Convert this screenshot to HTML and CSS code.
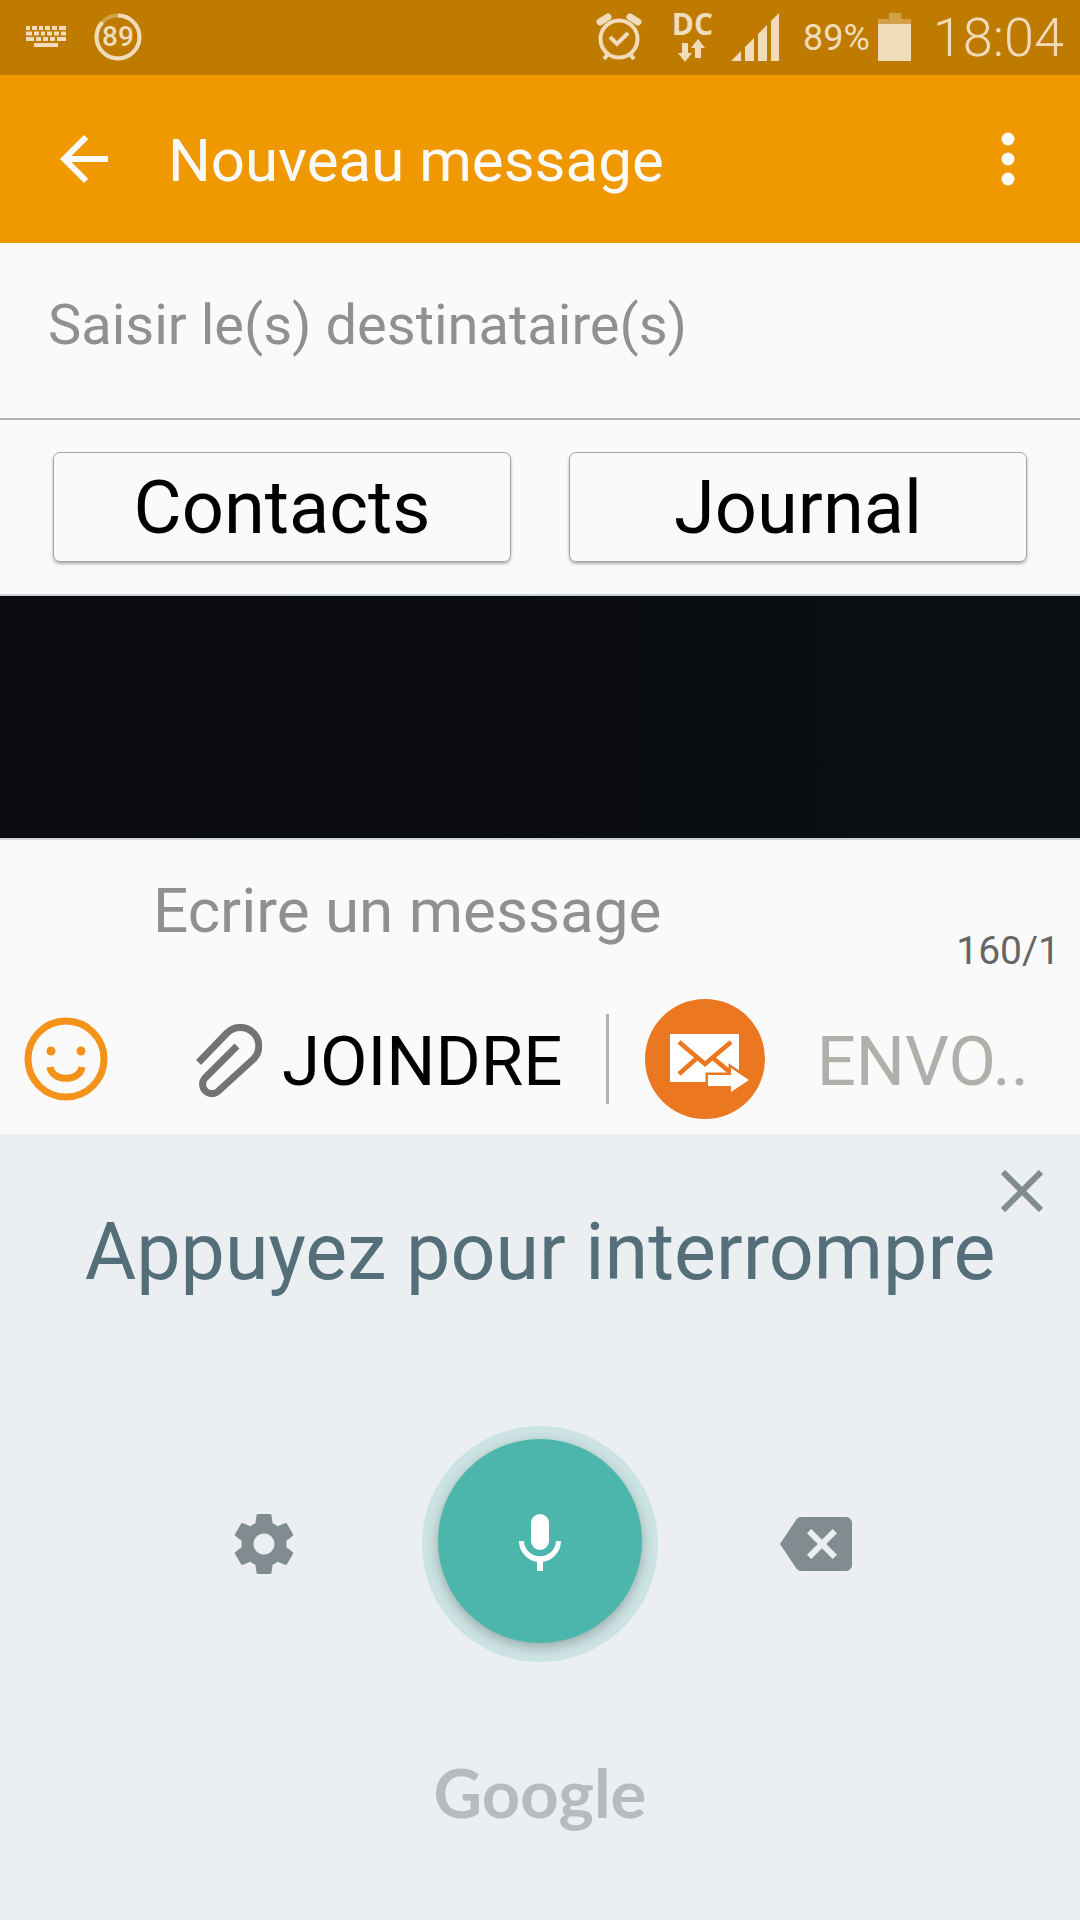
FILE: index.html
```html
<!DOCTYPE html>
<html lang="fr">
  <head>
    <meta charset="UTF-8" />
    <meta name="viewport" content="width=device-width, initial-scale=1" />
    <title>Nouveau message</title>
    <link rel="stylesheet" href="styles.css">
  </head>
  <body>
    <div class="statusbar">
      <svg class="keyboard-icon" width="40" height="21" viewBox="0 0 40 21">
        <path d="M0 2h40" stroke-dasharray="4 2 5 2 4 2 5 2 5 2 7" />
        <path d="M0 7.500h40" stroke-dasharray="6 2 5 2 4 2 5 2 5 2 5" />
        <path d="M0 13h40" stroke-dasharray="8 2 5 2 5 2 5 2 9" />
        <path d="M8 19h24" />
      </svg>
      <div class="battery-ring">
        <svg width="48" height="48" viewBox="0 0 48 48">
          <circle class="track" cx="24" cy="24" r="21.500" />
          <circle class="level" cx="24" cy="24" r="21.500" pathLength="100" stroke-dasharray="87 13" transform="rotate(-90 24 24)" />
        </svg>
        <span>89</span>
      </div>

      <div class="status-right">
        <svg class="alarm-icon" width="46" height="48" viewBox="0 0 46 48">
          <circle cx="23" cy="26" r="18.500" />
          <path d="M14 24l7 7 11-11" />
          <path d="M12 41l-4 5M34 41l4 5" />
          <path class="bell" d="M4 9l8-5M42 9l-8-5" />
        </svg>
        <div class="network">
          <span>DC</span>
          <svg width="28" height="24" viewBox="0 0 28 24">
            <path d="M4 4h6v10h4l-7 9-7-9h4zM17 19h6V9h4L20 0l-7 9h4z" />
          </svg>
        </div>
        <svg class="signal-icon" width="48" height="48" viewBox="0 0 48 48">
          <path d="M0 48L10 38v10zM14 34l9-9v23h-9zM27 21l9-9v36h-9zM40 8l8-8v48h-8z" />
        </svg>
        <span class="percent">89%</span>
        <svg class="battery-icon" width="33" height="48" viewBox="0 0 33 48">
          <path opacity=".4" d="M11 0h12v6h10v5H0V6h11z" />
          <path d="M0 11h33v37H0z" />
        </svg>
        <span class="clock">18:04</span>
      </div>
    </div>

    <header class="appbar">
      <button class="icon-btn" aria-label="Retour">
        <svg width="72" height="72" viewBox="0 0 24 24">
          <path d="M20 11H7.830l5.590-5.590L12 4l-8 8 8 8 1.410-1.410L7.830 13H20v-2z" />
        </svg>
      </button>
      <h1>Nouveau message</h1>
      <button class="icon-btn" aria-label="Plus d'options">
        <svg width="72" height="72" viewBox="0 0 72 72">
          <circle cx="36" cy="16" r="6.500" />
          <circle cx="36" cy="36" r="6.500" />
          <circle cx="36" cy="56" r="6.500" />
        </svg>
      </button>
    </header>

    <div class="recipients">
      <input type="text" aria-label="Destinataires" placeholder="Saisir le(s) destinataire(s)">
    </div>

    <div class="sources">
      <button>Contacts</button>
      <button>Journal</button>
    </div>

    <main class="conversation"></main>

    <div class="compose">
      <div class="message-row">
        <input type="text" aria-label="Message" placeholder="Ecrire un message">
        <span class="counter">160/1</span>
      </div>
      <div class="actions">
        <button class="smiley" aria-label="Emoticônes">
          <svg width="84" height="84" viewBox="0 0 84 84">
            <circle cx="42" cy="42" r="38" />
            <path d="M26 50c2 15 30 15 32 0" />
            <circle class="eye" cx="27" cy="34" r="4.500" />
            <circle class="eye" cx="57" cy="34" r="4.500" />
          </svg>
        </button>
        <button class="attach">
          <svg width="66" height="74" viewBox="0 0 66 74">
            <path d="M2.500 38.500L31 9A18.500 18.500 0 0 1 57.500 35L23 66.500A8.600 8.600 0 0 1 9 54L41 22" />
          </svg>
          JOINDRE
        </button>
        <div class="divider"></div>
        <button class="forward" aria-label="Transférer">
          <svg width="120" height="120" viewBox="0 0 120 120">
            <circle cx="60" cy="60" r="60" fill="#eb7720" />
            <path d="M25 35h69v48H25z" fill="#fff" />
            <path d="M34 43l26 22 26-22M34 75l18-16M68 59l18 15" fill="none" stroke="#eb7720" stroke-width="4.500" />
            <path d="M63 76h23v-7l18 12-18 12v-6H63z" fill="#fff" stroke="#eb7720" stroke-width="5" paint-order="stroke" />
          </svg>
        </button>
        <button class="send" disabled>ENVO..</button>
      </div>
    </div>

    <section class="voice">
      <button class="close" aria-label="Fermer">
        <svg width="42" height="42" viewBox="0 0 42 42">
          <path d="M2 2l38 38M40 2L2 40" />
        </svg>
      </button>
      <h2>Appuyez pour interrompre</h2>
      <div class="voice-controls">
        <button class="tool" aria-label="Paramètres">
          <svg width="72" height="72" viewBox="0 0 24 24">
            <path d="M19.430 12.980c.04-.32.07-.64.07-.98s-.03-.66-.07-.98l2.110-1.650c.19-.15.24-.42.12-.64l-2-3.460c-.12-.22-.39-.3-.61-.22l-2.490 1c-.52-.4-1.080-.73-1.690-.98l-.38-2.650C14.460 2.180 14.250 2 14 2h-4c-.25 0-.46.18-.49.42l-.38 2.650c-.61.25-1.170.59-1.690.98l-2.490-1c-.23-.09-.49 0-.61.22l-2 3.460c-.13.22-.07.49.12.64l2.110 1.650c-.04.32-.07.65-.07.98s.03.66.07.98l-2.110 1.650c-.19.15-.24.42-.12.64l2 3.460c.12.22.39.3.61.22l2.490-1c.52.4 1.080.73 1.690.98l.38 2.650c.03.24.24.42.49.42h4c.25 0 .46-.18.49-.42l.38-2.650c.61-.25 1.170-.59 1.690-.98l2.490 1c.23.09.49 0 .61-.22l2-3.460c.12-.22.07-.49-.12-.64l-2.110-1.650zM12 15.500c-1.930 0-3.500-1.570-3.500-3.500s1.570-3.500 3.500-3.500 3.500 1.570 3.500 3.500-1.570 3.500-3.500 3.500z" />
          </svg>
        </button>
        <div class="mic-ring">
          <button class="mic" aria-label="Interrompre la dictée">
            <svg width="72" height="72" viewBox="0 0 24 24">
              <rect x="9" y="2" width="6" height="12" rx="3" />
              <path d="M19 11c0 3.530-2.610 6.430-6 6.920V21h-2v-3.080c-3.390-.49-6-3.390-6-6.920h1.700c0 3 2.540 5.100 5.300 5.100s5.300-2.100 5.300-5.100z" />
            </svg>
          </button>
        </div>
        <button class="tool" aria-label="Effacer">
          <svg width="72" height="72" viewBox="0 0 24 24">
            <path d="M22 3H7c-.69 0-1.230.35-1.590.88L0 12l5.410 8.110c.36.53.9.89 1.590.89h15c1.100 0 2-.9 2-2V5c0-1.100-.9-2-2-2zm-3 12.590L17.590 17 14 13.410 10.410 17 9 15.590 12.590 12 9 8.410 10.410 7 14 10.590 17.590 7 19 8.410 15.410 12 19 15.590z" />
          </svg>
        </button>
      </div>
      <div class="brand">Google</div>
    </section>
  </body>
</html>
```

FILE: styles.css
```css
* {
  box-sizing: border-box;
}

body {
  margin: 0;
  min-height: 100vh;
  display: flex;
  flex-direction: column;
  font-family: Roboto, "Liberation Sans", sans-serif;
  background: #fafafa;
}

svg {
  display: block;
}

button {
  padding: 0;
  border: none;
  background: none;
  font-family: inherit;
  cursor: pointer;
}

input {
  width: 100%;
  padding: 0;
  border: none;
  outline: none;
  background: none;
  font-family: inherit;
}

input::placeholder {
  color: #909090;
  opacity: 1;
}

/* status bar */
.statusbar {
  display: flex;
  align-items: center;
  height: 75px;
  padding: 0 16px 2px 26px;
  background: #bf7a00;
  color: #f0dcba;
  fill: #f0dcba;
}

.keyboard-icon {
  stroke: #f0dcba;
  stroke-width: 4;
}

.battery-ring {
  display: grid;
  place-items: center;
  margin-left: 28px;
}

.battery-ring svg,
.battery-ring span {
  grid-area: 1 / 1;
}

.battery-ring span {
  font-size: 28px;
  font-weight: 500;
}

.battery-ring circle {
  fill: none;
  stroke: #f0dcba;
  stroke-width: 4;
}

.battery-ring .track {
  opacity: 0.4;
}

.status-right {
  display: flex;
  align-items: center;
  margin-left: auto;
}

.alarm-icon {
  fill: none;
  stroke: #f0dcba;
  stroke-width: 4;
}

.alarm-icon .bell {
  stroke-width: 7;
  stroke-linecap: round;
}

.network {
  display: flex;
  flex-direction: column;
  align-items: center;
  margin: 0 18px 0 30px;
  padding-bottom: 2px;
}

.network span {
  font-family: "Open Sans", sans-serif;
  font-size: 30px;
  font-weight: 700;
  line-height: 30px;
}

.percent {
  margin: 0 8px 0 24px;
  padding-top: 2px;
  font-size: 36px;
}

.clock {
  margin-left: 22px;
  padding-top: 2px;
  font-size: 54px;
  font-weight: 300;
}

/* app bar */
.appbar {
  display: flex;
  align-items: center;
  gap: 48px;
  height: 168px;
  padding: 0 36px 0 48px;
  background: #f09800;
  color: #fafafa;
  fill: #fafafa;
}

.appbar h1 {
  flex: 1;
  margin: 0;
  padding-top: 2px;
  font-size: 60px;
  font-weight: 400;
}

.icon-btn {
  fill: inherit;
}

/* recipients */
.recipients {
  padding: 47px 48px 58px;
  border-bottom: 2px solid #b2b2b2;
}

.recipients input {
  height: 70px;
  font-size: 56px;
}

.sources {
  display: flex;
  gap: 58px;
  padding: 32px 53px;
  border-bottom: 2px solid #cbd3d8;
}

.sources button {
  flex: 1;
  height: 110px;
  border: 1px solid #a5a5a5;
  border-radius: 7px;
  box-shadow: 0 2px 3px rgba(0, 0, 0, 0.3);
  font-size: 74px;
  color: #000;
}

.conversation {
  height: 242px;
  background: linear-gradient(90deg, #0b0b10, #0b0c10 45%, #0b1113);
}

/* message editor */
.compose {
  padding-bottom: 15px;
  border-top: 2px solid #cbd3d8;
}

.message-row {
  display: flex;
  justify-content: space-between;
  height: 159px;
  padding: 35px 20px 25px 153px;
}

.message-row input {
  flex: 1;
  height: 70px;
  font-size: 62px;
}

.counter {
  align-self: flex-end;
  font-size: 39px;
  line-height: 46px;
  color: #666;
}

.actions {
  display: flex;
  align-items: center;
  height: 120px;
  padding: 0 24px;
  font-size: 69px;
}

.smiley svg {
  fill: none;
  stroke: #f49219;
  stroke-width: 7;
}

.smiley .eye {
  fill: #f49219;
  stroke: none;
}

.attach {
  display: flex;
  align-items: center;
  gap: 20px;
  margin-left: 88px;
  padding-top: 4px;
  font-size: inherit;
  color: #000;
}

.attach svg {
  fill: none;
  stroke: #737373;
  stroke-width: 7;
}

.divider {
  width: 3px;
  height: 90px;
  margin: 0 36px 0 auto;
  background: #b2b2b2;
}

.send {
  margin: 0 27px 0 52px;
  padding-top: 4px;
  font-size: inherit;
  color: #b0b0ab;
}

/* voice input */
.voice {
  flex: 1;
  display: flex;
  flex-direction: column;
  align-items: center;
  padding: 36px 37px 24px;
  background: #ebeff2;
  fill: #808c8f;
}

.close {
  align-self: flex-end;
}

.close svg {
  stroke: #808c8f;
  stroke-width: 6;
}

.voice h2 {
  margin: 0;
  font-size: 79px;
  line-height: 80px;
  font-weight: 400;
  color: #546e7a;
}

.voice-controls {
  display: flex;
  align-items: center;
  gap: 122px;
  margin-top: 134px;
}

.tool {
  fill: inherit;
}

.mic-ring {
  padding: 13px 16px 19px;
  border-radius: 50%;
  background: #cbe3e2;
}

.mic {
  display: grid;
  place-items: center;
  width: 204px;
  height: 204px;
  padding-top: 6px;
  border-radius: 50%;
  background: #4db6ac;
  box-shadow: 0 4px 12px rgba(0, 0, 0, 0.25);
  fill: #fff;
}

.brand {
  margin-top: 90px;
  font-family: Lato, sans-serif;
  font-size: 67px;
  font-weight: 700;
  color: #b7bbbe;
}
```
